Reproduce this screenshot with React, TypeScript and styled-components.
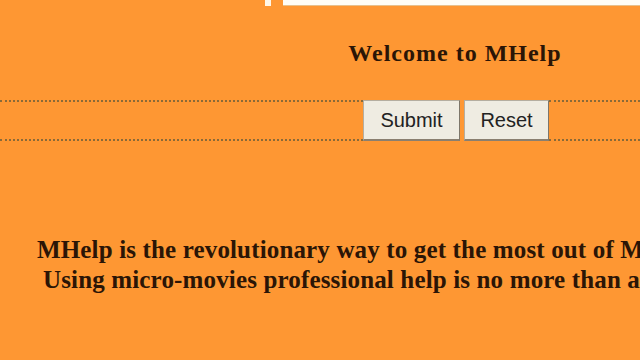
import React from "react";
import styled, { createGlobalStyle } from "styled-components";

const GlobalStyle = createGlobalStyle`
  html, body {
    margin: 0;
    padding: 0;
    background: #fe9733;
    overflow: hidden;
  }
`;

const Page = styled.main`
  width: 640px;
  height: 360px;
  background: #fe9733;
  overflow: hidden;
  font-family: "Liberation Serif", "Times New Roman", serif;
  color: #2b1506;
`;

const TopBar = styled.div`
  display: grid;
  grid-template-columns: 265px 6px 12px 1fr;
  height: 6px;
`;

const Gap = styled.div``;

const Tab = styled.div`
  background: #fff7e8;
`;

const SearchBox = styled.div`
  background: #fffdf6;
  border-bottom: 1px solid #e7c08c;
`;

const Heading = styled.h1`
  margin: 0;
  padding: 33px 0 0 270px;
  height: 94px;
  box-sizing: border-box;
  text-align: center;
  font-size: 24px;
  letter-spacing: 1px;
  font-weight: bold;
  line-height: 28px;
`;

const ButtonRow = styled.div`
  display: flex;
  align-items: stretch;
  height: 41px;
`;

const Rule = styled.div<{ $grow: number }>`
  flex: ${(p) => p.$grow};
  border-top: 2px dotted #8a6a38;
  border-bottom: 2px dotted #8a6a38;
  box-sizing: border-box;
  height: 41px;
`;

const Buttons = styled.div`
  display: flex;
  gap: 4px;
`;

const Button = styled.button<{ $w: number }>`
  width: ${(p) => p.$w}px;
  height: 41px;
  background: #efece2;
  border: 1px solid #b5aea0;
  border-right-color: #7d766a;
  border-bottom: 2px solid #8a7f70;
  font-family: "Liberation Sans", Arial, sans-serif;
  font-size: 20px;
  color: #222;
  padding: 0;
`;

const Intro = styled.section`
  padding-top: 94px;
  white-space: nowrap;
  font-size: 25px;
  letter-spacing: 0.15px;
  font-weight: bold;
  line-height: 30px;
`;

const Line = styled.p<{ $indent: number }>`
  margin: 0;
  padding-left: ${(p) => p.$indent}px;
`;

export default function App() {
  return (
    <>
      <GlobalStyle />
      <Page>
        <TopBar>
          <Gap />
          <Tab />
          <Gap />
          <SearchBox />
        </TopBar>
        <Heading>Welcome to MHelp</Heading>
        <ButtonRow>
          <Rule $grow={363} />
          <Buttons>
            <Button $w={97}>Submit</Button>
            <Button $w={85}>Reset</Button>
          </Buttons>
          <Rule $grow={91} />
        </ButtonRow>
        <Intro>
          <Line $indent={37}>MHelp is the revolutionary way to get the most out of MHelp.</Line>
          <Line $indent={43}>Using micro-movies professional help is no more than a click away.</Line>
        </Intro>
      </Page>
    </>
  );
}
